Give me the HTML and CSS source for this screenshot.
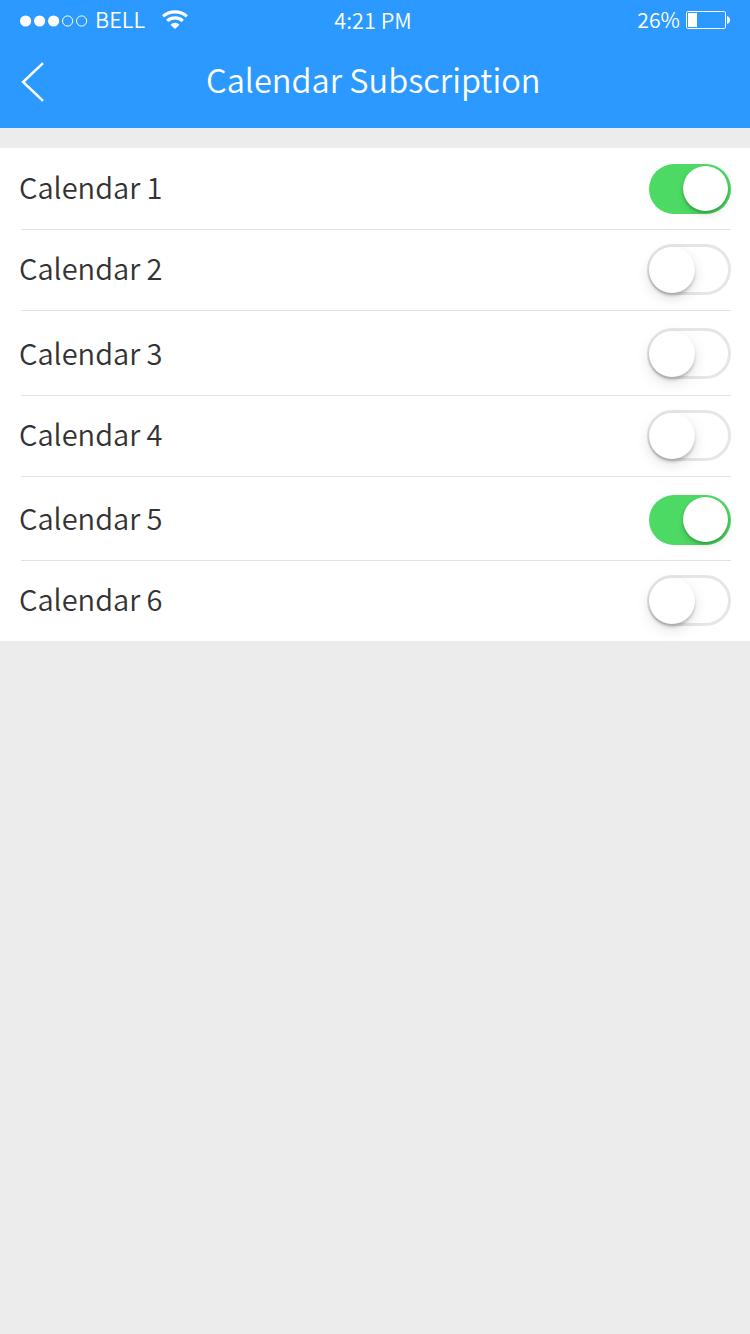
FILE: index.html
```html
<!DOCTYPE html>
<html lang="en">
<head>
<meta charset="utf-8">
<title>Calendar Subscription</title>
<link rel="stylesheet" href="styles.css">
</head>
<body>
<header class="header">
  <div class="status">
    <div class="carrier">
      <svg class="signal" width="68" height="12" viewBox="0 0 68 12"><g fill="#fff"><circle cx="5.6" cy="6" r="5.6"/><circle cx="19.6" cy="6" r="5.6"/><circle cx="33.6" cy="6" r="5.6"/></g><g fill="none" stroke="#fff"><circle cx="47.6" cy="6" r="5.1"/><circle cx="61.6" cy="6" r="5.1"/></g></svg>
      <span class="carrier-name">BELL</span>
      <svg class="wifi" width="26" height="19" viewBox="0 0 26 19"><g fill="none" stroke="#fff" stroke-width="3.1"><path d="M1.1 6.4Q6 1.9 13 1.9T24.900 6.400"/><path d="M5.200 10.800Q8.500 7.900 13 7.900T20.800 10.800"/></g><path fill="#fff" d="M8.500 14.800Q10.500 12.700 13 12.700T17.500 14.800L13 18.900Z"/></svg>
    </div>
    <span class="time">4:21 PM</span>
    <div class="power">
      <span class="percent">26%</span>
      <svg class="battery" width="45" height="18" viewBox="0 0 45 18"><rect x=".5" y=".5" width="39" height="17" rx="1.2" fill="none" stroke="#fff"/><path fill="#fff" d="M2 2H11V16H2ZM41 5Q44 6 44 9T41 13Z"/></svg>
    </div>
  </div>
  <div class="nav">
    <svg class="back" width="24" height="40" viewBox="0 0 24 40"><path d="M22 1.200L2.100 20L22 38.800" fill="none" stroke="#fff" stroke-width="2.500"/></svg>
    <h1 class="title">Calendar Subscription</h1>
  </div>
</header>
<main class="list">
  <div class="row row-first"><span class="label">Calendar 1</span><span class="switch on"><i class="knob"></i></span></div>
  <div class="row"><span class="label">Calendar 2</span><span class="switch"><i class="knob"></i></span></div>
  <div class="row row-third"><span class="label">Calendar 3</span><span class="switch"><i class="knob"></i></span></div>
  <div class="row"><span class="label">Calendar 4</span><span class="switch"><i class="knob"></i></span></div>
  <div class="row row-fifth"><span class="label">Calendar 5</span><span class="switch on"><i class="knob"></i></span></div>
  <div class="row row-last"><span class="label">Calendar 6</span><span class="switch"><i class="knob"></i></span></div>
</main>
</body>
</html>
```
FILE: styles.css
```css
* { box-sizing: border-box; }
body {
  margin: 0;
  min-height: 1334px;
  background: #ececec;
  color: #333;
  font-family: "Noto Sans CJK SC", sans-serif;
}
svg { display: block; flex: none; }
.header { height: 128px; background: #2b99ff; color: #fff; }
.status {
  display: grid;
  grid-template-columns: 1fr auto 1fr;
  height: 40px;
  padding: 0 19px 0 20px;
  font-size: 21.700px;
  line-height: 38px;
  font-weight: 350;
}
.carrier, .power { display: flex; align-items: center; height: 40px; }
.signal { margin-top: 1px; }
.carrier-name { margin-left: 7px; }
.carrier-name, .percent { padding-bottom: 2px; }
.wifi { margin: 0 0 2px 17px; }
.time { padding: 1px 5px 0 0; }
.power { justify-content: flex-end; }
.percent { font-size: 21.200px; }
.battery { margin: 0 0 0 6px; }
.nav { display: flex; height: 88px; padding: 22px 0 0 20.500px; }
.title {
  margin: -5px 0 0 161.500px;
  font-size: 32.600px;
  line-height: 44px;
  font-weight: 350;
  white-space: nowrap;
}
.list { margin-top: 20px; background: #fff; }
.row {
  display: flex;
  justify-content: space-between;
  align-items: flex-start;
  height: 81px;
  margin: 0 19px 0 21px;
  padding-top: 14px;
  border-bottom: 1px solid #e2e2e2;
}
.row-first { height: 82px; padding-top: 15px; }
.row-third { height: 85px; padding-top: 18px; }
.row-fifth { height: 84px; padding-top: 17px; }
.row-last { height: 80px; border-bottom: 0; }
.label {
  margin: -3px 0 0 -2px;
  font-size: 29px;
  line-height: 52px;
  font-weight: 350;
}
.switch {
  display: flex;
  width: 84px;
  height: 51px;
  border: 3px solid #e6e6e6;
  border-radius: 26px;
}
.row-third .switch { margin-top: -1px; }
.knob {
  width: 46px;
  height: 46px;
  margin: -.5px 0 0 -1px;
  border-radius: 50%;
  background: #fff;
  box-shadow: 0 3px 3px rgba(0,0,0,.18), 0 5px 14px rgba(0,0,0,.13);
}
.switch.on {
  width: 82px;
  height: 50px;
  margin-top: 1px;
  border: 0;
  background: #4cd964;
}
.on .knob {
  width: 45px;
  height: 45px;
  margin: 2px 0 0 34px;
  box-shadow: 0 2px 3px rgba(0,70,15,.35), 1px 5px 10px rgba(0,0,0,.08);
}
```
